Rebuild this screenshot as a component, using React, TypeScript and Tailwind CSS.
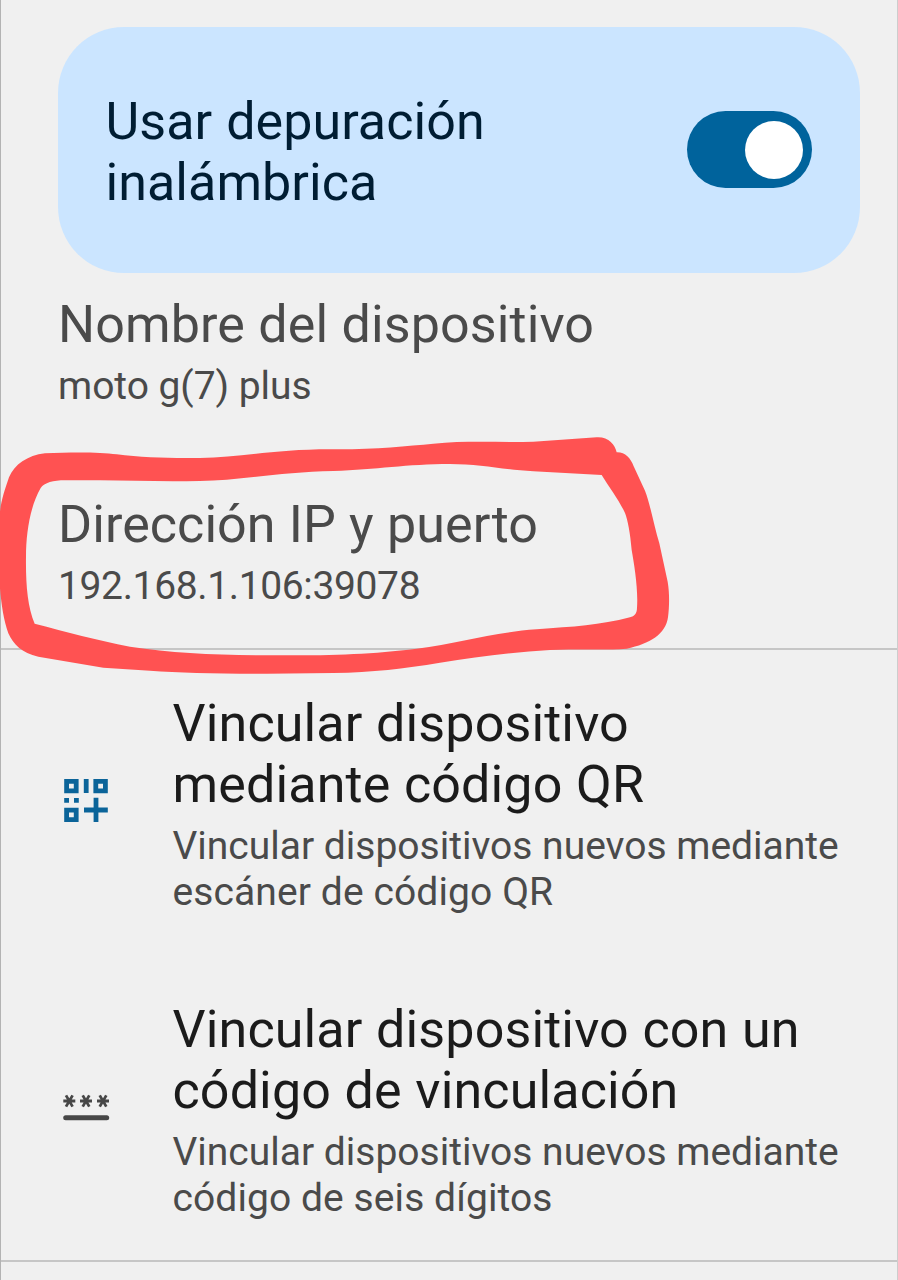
import type { ReactNode } from "react";

function Title({ children, className }: { children: ReactNode; className: string }) {
  return <div className={`whitespace-nowrap text-[52px] leading-[61px] ${className}`}>{children}</div>;
}

function Summary({ children, className = "" }: { children: ReactNode; className?: string }) {
  return <div className={`mt-2 whitespace-nowrap text-[39px] leading-[46px] text-[#4a4a4a] ${className}`}>{children}</div>;
}

function QrIcon() {
  return (
    <svg className="h-[46px] w-[46px]" viewBox="0 0 46 46" fill="none" stroke="#0b6499" strokeWidth="4.8">
      <path d="M3.6 3.4h9.6v9.4h-9.6zM32.8 3.4h9.6v9.4h-9.6zM3.6 32.2h9.6v9.4h-9.6z" />
      <path d="M23.2 1v14M1.2 22.4h4.8M11 22.4h4.8M21 32h23.8M33 19.8v24.3" />
    </svg>
  );
}

function PinIcon() {
  return (
    <svg className="h-[30px] w-[48px]" viewBox="0 0 48 30" fill="none" stroke="#474747">
      {[7.3, 24, 41].map((x) => (
        <g key={x} transform={`translate(${x} 8)`} strokeWidth="2.8">
          <path d="M-6 0H6M-3.3 -5.6L3.3 5.6M3.3 -5.6L-3.3 5.6" />
        </g>
      ))}
      <path d="M3.7 24.7h41" strokeWidth="5" strokeLinecap="round" />
    </svg>
  );
}

export default function App() {
  return (
    <main className="relative flex h-[1280px] w-[898px] flex-col border-x border-l-[#b3b3b3] border-r-[#cdcdcd] bg-[#f0f0f0] font-['Roboto',sans-serif]">
      <section className="mt-[27px] mr-[37px] ml-[56.5px] flex h-[245.5px] shrink-0 items-start justify-between rounded-[66px] bg-[#cbe5ff] pr-12 pl-12">
        <Title className="mt-[64px] tracking-[0.06px] text-[#001d33] [word-spacing:1px]">
          Usar depuración
          <br />
          inalámbrica
        </Title>
        <button role="switch" aria-checked="true" aria-label="Usar depuración inalámbrica" className="mt-[84px] flex h-[77px] w-[125px] items-center justify-end rounded-full bg-[#00639c] pr-[9.5px]">
          <span className="size-[58px] rounded-full bg-white" />
        </button>
      </section>

      <section className="mt-[21.5px] h-[200px] shrink-0 pl-[57px]">
        <Title className="tracking-[0.12px] text-[#4a4a4a] [word-spacing:0.3px]">Nombre del dispositivo</Title>
        <Summary className="tracking-[-0.05px]">moto g(7) plus</Summary>
      </section>
      <section className="h-[156px] shrink-0 border-b-2 border-[#c6c6c6] pl-[57px]">
        <Title className="tracking-[0.08px] text-[#4a4a4a] [word-spacing:0.2px]">Dirección IP y puerto</Title>
        <Summary className="tracking-[-0.36px]">192.168.1.106:39078</Summary>
      </section>

      <section className="flex h-[306px] shrink-0 items-start pt-[43px]">
        <div className="mt-[85px] ml-[62px] w-[109.5px] shrink-0"><QrIcon /></div>
        <div>
          <Title className="tracking-[0.14px] text-[#1b1b1b] [word-spacing:0.5px]">
            Vincular dispositivo
            <br />
            mediante código QR
          </Title>
          <Summary>
            Vincular dispositivos nuevos mediante
            <br />
            <span className="tracking-[0.1px]">escáner de código QR</span>
          </Summary>
        </div>
      </section>
      <section className="flex h-[306px] shrink-0 items-start border-b-2 border-[#c6c6c6] pt-[43px]">
        <div className="mt-[94px] ml-[61px] w-[110.5px] shrink-0"><PinIcon /></div>
        <div>
          <Title className="tracking-[0.14px] text-[#1b1b1b] [word-spacing:0.5px]">
            Vincular dispositivo con un
            <br />
            código de vinculación
          </Title>
          <Summary>
            Vincular dispositivos nuevos mediante
            <br />
            <span className="tracking-[0.08px]">código de seis dígitos</span>
          </Summary>
        </div>
      </section>

      <svg className="pointer-events-none absolute top-[430px] -left-px h-[260px] w-[700px]" viewBox="0 0 2100 780">
        <path
          fill="#ff5252"
          fillRule="evenodd"
          d="M135 70C215 66 300 66 350 73C430 84 520 85 600 84C720 82 830 57 1000 58C1120 59 1220 48 1300 41C1400 31 1500 38 1600 35L1790 22C1825 20 1845 43 1850 67C1875 66 1892 84 1901 109L1935 182C1951 223 1962 288 1978 340L2003 455C2009 490 2008 530 2004 562C1997 612 1950 642 1880 656C1830 661 1750 657 1650 660C1540 666 1430 680 1320 698C1210 716 1120 727 1000 729L800 731C650 731 540 728 450 722L310 713L115 680C65 669 40 643 25 610C12 573 4 527 0 475V245C4 210 14 180 27 142C43 104 82 76 135 70Z
             M195 151C160 151 133 158 122 174C90 230 78 310 78 380C77 460 82 530 104 581C200 606 290 630 390 650C530 671 670 676 850 676C1010 676 1120 672 1250 656C1380 639 1480 607 1610 598C1720 590 1800 586 1890 562C1904 558 1911 550 1911 533C1915 480 1903 405 1895 360C1891 310 1883 269 1875 249C1856 207 1828 174 1805 135L1600 124C1510 119 1440 102 1350 102C1220 102 1130 119 1000 123C880 125 780 140 680 149C550 158 420 152 300 151Z"
        />
      </svg>
    </main>
  );
}
